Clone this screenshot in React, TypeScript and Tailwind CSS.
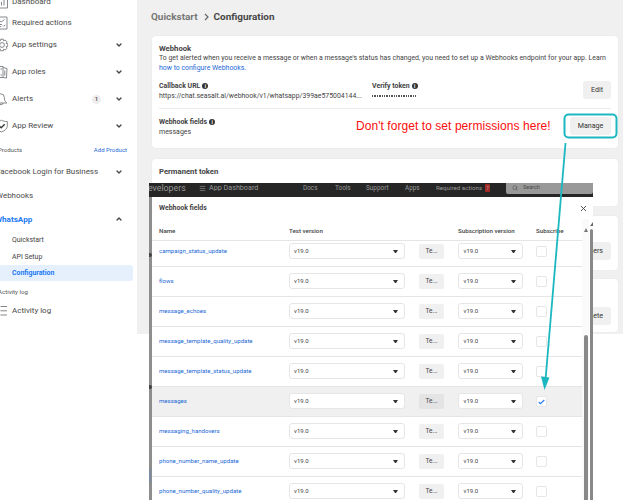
import type { ReactNode } from "react";
import { ChevronDown, ChevronUp, Menu, Search, X } from "lucide-react";

function Icon({ name }: { name: string }) {
  return (
    <svg width="14" height="14" viewBox="0 0 14 14" fill="none" stroke="#777a7e" strokeWidth="0.9" className="shrink-0">
      {name === "dashboard" && <path d="M1.500.500h12v12.500h-12zM7.500 10.500V7m2.500 3.500V5" />}
      {name === "required" && <path d="M1.500 1h11.500v12H1.500zM6 5l1.200 1L10.500 3.500M6 8.500h2M6 10.500h1.200M9 9.500l.8.800 1.500-1.500" />}
      {name === "settings" && (
        <g transform="translate(1 0)">
          <circle cx="7" cy="7" r="2.400" />
          <path d="M5.700 1.200h2.600l.4 1.700 1.500-.9 1.800 1.800-.9 1.500 1.700.4v2.600l-1.700.4.900 1.500-1.800 1.800-1.500-.9-.4 1.700H5.700l-.4-1.700-1.500.9L2 10.200l.9-1.500-1.700-.4V5.700l1.700-.4L2 3.800 3.800 2l1.500.9z" />
        </g>
      )}
      {name === "roles" && <path d="M5 1.500h4v11H5zM9 2.500l4 1-.5 9.500-3.500-.5M6.500 4H8M10.800 5.500v5M6.500 10H8" />}
      {name === "alerts" && <path d="M1 11c1.800-1.700 2-3.500 2-5.500a3.700 3.700 0 0 1 7.400 0c0 2 .2 3.800 2.400 5.500zM5.500 11a1.700 1.700 0 0 0 3.400 0" />}
      {name === "review" && (
        <>
          <path d="M7.500 1.200c1.700 1 3.500 1.300 5.800 1.300v4.300c0 3-2.600 5-5.800 6.200C4.400 11.800 2 9.800 2 6.800V2.500c2 0 3.800-.3 5.500-1.300z" />
          <path d="m5.500 7.200 1.700 1.600 3.500-3.500" stroke="#333" strokeWidth="1.300" />
        </>
      )}
      {name === "log" && <path d="M6.500 2.500h6.500M6.500 6.800h6.500M6.500 11h6.500" />}
    </svg>
  );
}

function NavItem({ icon, label, h, arrow, badge }: { icon: string; label: string; h: string; arrow?: boolean; badge?: boolean }) {
  return (
    <div className={`flex shrink-0 items-center ${h}`}>
      <div className="-ml-[6px] mr-[4px] flex w-[14px] shrink-0">
        <Icon name={icon} />
      </div>
      <span className="flex-1 text-[8px] text-[#4b4b4b]">{label}</span>
      {badge && <span className="mr-[14px] flex h-[9px] w-[9px] items-center justify-center rounded-full bg-[#ededed] text-[6px] font-medium text-[#444]">1</span>}
      {arrow && <ChevronDown size={8} strokeWidth={4} className="mr-[14px] text-[#444]" />}
    </div>
  );
}

function Sidebar() {
  return (
    <aside className="flex h-[334px] w-[137px] shrink-0 flex-col overflow-hidden bg-white">
      <div className="-mt-[9px]" />
      <NavItem icon="dashboard" label="Dashboard" h="h-[21px]" />
      <NavItem icon="required" label="Required actions" h="h-[21px]" />
      <NavItem icon="settings" label="App settings" h="h-[24px]" arrow />
      <NavItem icon="roles" label="App roles" h="h-[30px]" arrow />
      <NavItem icon="alerts" label="Alerts" h="h-[24px]" arrow badge />
      <NavItem icon="review" label="App Review" h="h-[29px]" arrow />
      <div className="flex h-[20px] shrink-0 items-center justify-between pr-[10px] text-[6px]">
        <span className="-ml-[2px] text-[#555]">Products</span>
        <span className="text-[#1b69d6]">Add Product</span>
      </div>
      <div className="flex h-[23px] shrink-0 items-center justify-between pr-[14px] text-[7.950px] text-[#4b4b4b]">
        <span className="-ml-[4px] whitespace-nowrap pt-px">Facebook Login for Business</span>
        <ChevronDown size={8} strokeWidth={4} />
      </div>
      <div className="flex h-[24px] shrink-0 items-center text-[7.950px] text-[#4b4b4b]">
        <span className="-ml-[4px] pt-px">Webhooks</span>
      </div>
      <div className="flex h-[24px] shrink-0 items-center justify-between pr-[14px] text-[8.100px] font-bold text-[#2078f4]">
        <span className="-ml-[5px]">WhatsApp</span>
        <ChevronUp size={8} strokeWidth={4} className="text-[#444]" />
      </div>
      <div className="flex h-[17px] shrink-0 items-center pl-[12px] pt-[2px] text-[6.950px] text-[#444]">Quickstart</div>
      <div className="flex h-[17px] shrink-0 items-center pl-[12px] pt-px text-[6.950px] text-[#444]">API Setup</div>
      <div className="mr-[4px] flex h-[16px] shrink-0 items-center rounded-r-[3px] bg-[#e6f0fd] pl-[12px] pt-px text-[6.900px] font-bold text-[#2078f4]">Configuration</div>
      <div className="flex h-[23px] shrink-0 items-center text-[6.100px] text-[#555]">
        <span className="-ml-[2px]">Activity log</span>
      </div>
      <NavItem icon="log" label="Activity log" h="h-[13px]" />
    </aside>
  );
}

function Info() {
  return (
    <span className="ml-[2px] inline-flex h-[6px] w-[6px] shrink-0 items-center justify-center rounded-full bg-[#333] text-[5px] font-bold leading-none text-white">i</span>
  );
}

function Button({ children, className }: { children: ReactNode; className: string }) {
  return <div className={`flex h-[18px] items-center whitespace-nowrap rounded-[3px] bg-[#f0f0f0] text-[7.100px] text-[#333] ${className}`}>{children}</div>;
}

function Page() {
  return (
    <main className="flex h-[334px] w-[486px] flex-col overflow-hidden bg-[#f0f0f0] pl-[15px] pr-[5px]">
      <h1 className="-ml-px flex h-[36px] shrink-0 items-center pb-[3px] text-[9.950px] font-bold">
        <span className="text-[#777]">Quickstart</span>
        <svg width="5" height="8" viewBox="0 0 5 8" fill="none" stroke="#666" strokeWidth="1.200" className="ml-[6px] mr-[5px] mt-px">
          <path d="m1 1 3 3-3 3" />
        </svg>
        <span className="text-[#464646]">Configuration</span>
      </h1>
      <section className="h-[112px] shrink-0 rounded-[4px] bg-white px-[7px] pt-[8px] shadow-[0_0_2px_rgba(0,0,0,0.06)]">
        <h2 className="h-[9px] text-[7.700px] font-bold leading-[9px] text-[#444]">Webhook</h2>
        <p className="whitespace-nowrap text-[6.920px] leading-[10px] text-[#444]">
          To get alerted when you receive a message or when a message's status has changed, you need to set up a Webhooks endpoint for your app. Learn
          <br />
          <span className="text-[#1b69d6]">how to configure Webhooks.</span>
        </p>
        <div className="mt-[8px] flex h-[28px] border-b border-[#ececec]">
          <div className="w-[213px]">
            <div className="flex h-[10px] items-center text-[6.950px] font-bold text-[#444]">Callback URL<Info /></div>
            <div className="whitespace-nowrap text-[6.900px] leading-[10px] text-[#444]">https://chat.seasalt.ai/webhook/v1/whatsapp/399ae575004144...</div>
          </div>
          <div className="flex-1">
            <div className="flex h-[10px] items-center text-[6.950px] font-bold text-[#444]">Verify token<Info /></div>
            <div className="mt-[4px] h-[1.500px] w-[44px] bg-[repeating-linear-gradient(90deg,#555_0_1.500px,transparent_1.500px_2.400px)]" />
          </div>
          <Button className="w-[28px] justify-center">Edit</Button>
        </div>
        <div className="mt-[8px] flex justify-between">
          <div>
            <div className="flex h-[10px] items-center text-[6.950px] font-bold text-[#444]">Webhook fields<Info /></div>
            <div className="text-[7px] leading-[10px] text-[#444]">messages</div>
          </div>
          <Button className="w-[41px] justify-center">Manage</Button>
        </div>
      </section>
      <section className="mt-[11px] h-[47px] shrink-0 rounded-[4px] bg-white px-[7px] pt-[8px] text-[7.700px] font-bold leading-[9px] text-[#444] shadow-[0_0_2px_rgba(0,0,0,0.06)]">Permanent token</section>
      <section className="mt-[10px] flex h-[54px] shrink-0 items-center justify-end rounded-[4px] bg-white px-[7px] pt-[15px] shadow-[0_0_2px_rgba(0,0,0,0.06)]">
        <Button className="w-[90px] justify-end pr-[8px]">Manage phone numbers</Button>
      </section>
      <section className="mt-[9px] flex h-[53px] shrink-0 justify-end rounded-[4px] bg-white px-[7px] pt-[28px] shadow-[0_0_2px_rgba(0,0,0,0.06)]">
        <Button className="w-[40px] justify-end pr-[8px]">Delete</Button>
      </section>
    </main>
  );
}

function Select({ w }: { w: string }) {
  return (
    <div className={`-mt-px flex h-[16px] shrink-0 items-center justify-between rounded-[3px] border border-[#e6e6e6] bg-white pl-[4.500px] pr-[6px] text-[6px] text-[#444] ${w}`}>
      v19.0
      <svg width="5" height="3" viewBox="0 0 5 3" fill="#333">
        <path d="M0 0h5L3 3H2z" />
      </svg>
    </div>
  );
}

const FIELDS = [
  "campaign_status_update",
  "flows",
  "message_echoes",
  "message_template_quality_update",
  "message_template_status_update",
  "messages",
  "messaging_handovers",
  "phone_number_name_update",
  "phone_number_quality_update",
];

function Row({ name }: { name: string }) {
  const on = name === "messages";
  return (
    <div className={`flex h-[30px] shrink-0 items-center border-b border-[#e5e5e5] pl-[7px] ${on ? "bg-[#f0f0f0]" : ""}`}>
      <span className="w-[129.500px] shrink-0 whitespace-nowrap text-[6.080px] text-[#1b69d6]">{name}</span>
      <Select w="w-[116.500px]" />
      <div className={`mx-[14px] flex h-[15px] w-[25px] shrink-0 items-center justify-center rounded-[2px] text-[6.500px] text-[#444] ${on ? "bg-[#e4e4e4]" : "bg-[#f0f0f0]"}`}>Te...</div>
      <Select w="w-[64.500px]" />
      <div className="ml-[13px] flex h-[11px] w-[11px] shrink-0 items-center justify-center rounded-[2px] border border-[#e6e6e6] bg-white">
        {on && (
          <svg width="7" height="6" viewBox="0 0 7 6" fill="none" stroke="#2c7df5" strokeWidth="1.200">
            <path d="m.7 3 1.800 1.700L6.300 1" />
          </svg>
        )}
      </div>
    </div>
  );
}

function FieldsWindow() {
  return (
    <div className="absolute left-[149px] top-[183px] flex h-[317px] w-[444px] flex-col overflow-hidden bg-white">
      <header className="flex h-[14px] shrink-0 items-center overflow-hidden whitespace-nowrap bg-[#262626] pb-[4px] text-[6.400px] text-[#999]">
        <span className="-ml-[6px] w-[56px] text-[8.800px] leading-[9px]">developers</span>
        <Menu size={7} strokeWidth={2} className="shrink-0" />
        <span className="ml-[3px] w-[94px] text-[7.200px]">App Dashboard</span>
        <span className="w-[32px]">Docs</span>
        <span className="w-[31px]">Tools</span>
        <span className="w-[39px]">Support</span>
        <span className="w-[31px]">Apps</span>
        <span className="text-[6.200px]">Required actions</span>
        <span className="ml-[3px] flex h-[8px] w-[5px] shrink-0 items-center justify-center rounded-[1px] bg-[#a52a26] text-[5px]">7</span>
        <div className="ml-auto flex h-[11px] w-[87px] shrink-0 items-center rounded-b-[2px] bg-[#999] pl-[6px] text-[5.500px] text-[#4b4b4b]">
          <Search size={6} className="mr-[5px]" />
          Search
        </div>
      </header>
      <div className="flex min-h-0 flex-1">
        <div className="flex w-[3px] shrink-0 flex-col bg-[#8e8e8e] pt-[56px]">
          <span className="h-[4px] w-[3px] rounded-r-full bg-[#444]" />
          <span className="mt-[128px] h-[4px] w-[3px] rounded-r-full bg-[#444]" />
          <span className="mt-[80px] h-[13px] w-[2px] bg-[#7d8ba1]" />
        </div>
        <div className="flex min-w-0 flex-1 flex-col">
          <div className="flex h-[22px] shrink-0 items-center justify-between pl-[7px] pr-[5px] text-[6.900px] font-bold text-[#444]">
            Webhook fields
            <X size={9} strokeWidth={2.500} />
          </div>
          <div className="flex min-h-0 flex-1">
            <div className="flex w-[430px] shrink-0 flex-col overflow-hidden">
              <div className="flex h-[22px] shrink-0 items-center whitespace-nowrap border-b border-[#e5e5e5] pl-[7px] pt-[4px] text-[6.200px] font-medium text-[#444]">
                <span className="w-[130px] shrink-0">Name</span>
                <span className="w-[169px] shrink-0">Test version</span>
                <span className="w-[78px] shrink-0">Subscription version</span>
                <span>Subscribe</span>
              </div>
              <div className="-mt-[4px] flex flex-col">
                {FIELDS.map((name) => (
                  <Row key={name} name={name} />
                ))}
              </div>
            </div>
            <div className="flex w-[7px] shrink-0 flex-col items-center bg-[#fafafa] pt-[9px]">
              <span className="h-0 w-0 border-x-[2.500px] border-b-[4px] border-x-transparent border-b-[#777]" />
              <span className="mt-[103px] w-[4px] flex-1 rounded-t-full bg-[#888]" />
            </div>
            <div className="ml-px flex w-[3px] shrink-0 flex-col items-end pt-[3px]">
              <span className="h-0 w-0 border-b-[4px] border-l-[3px] border-b-[#666] border-l-transparent" />
              <span className="mt-[3px] w-[3px] flex-1 rounded-t-full bg-[#888]" />
            </div>
          </div>
        </div>
      </div>
    </div>
  );
}

export default function App() {
  return (
    <div className="relative flex h-[500px] w-[623px] items-start overflow-hidden bg-white font-[Roboto,'Liberation_Sans',sans-serif] leading-none">
      <Sidebar />
      <Page />
      <FieldsWindow />
      <div className="absolute left-[356px] top-[119px] whitespace-nowrap font-['Liberation_Sans',sans-serif] text-[12px] leading-[14px] tracking-[0.060px] text-[#fb0d0d]">Don't forget to set permissions here!</div>
      <svg width="623" height="500" viewBox="0 0 623 500" className="absolute left-0 top-0" fill="none" stroke="#1cb8c1">
        <rect x="564.500" y="114.500" width="52" height="23" rx="4" strokeWidth="2" />
        <path d="M565.500 143 545.500 380" strokeWidth="1.800" />
        <path d="m541 376.500 8.500 1-5 12.500z" fill="#1cb8c1" stroke="none" />
      </svg>
    </div>
  );
}
